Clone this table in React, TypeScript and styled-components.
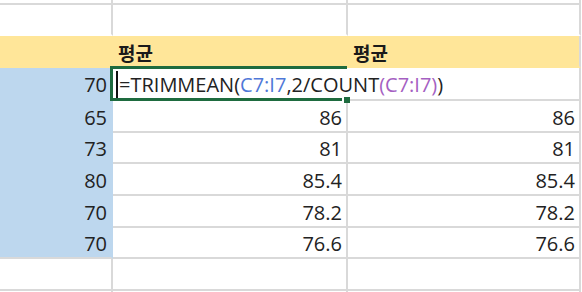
import React from "react";
import styled, { createGlobalStyle } from "styled-components";

const GlobalStyle = createGlobalStyle`
  html, body {
    margin: 0;
    padding: 0;
    background: #ffffff;
  }
  body {
    font-family: "Open Sans", "Noto Sans CJK KR", sans-serif;
    color: #222222;
  }
`;

const GRID = "#d9d9d9";
const YELLOW = "#ffe699";
const BLUE = "#bdd7ee";
const GREEN = "#1e6b3f";

const Sheet = styled.div`
  display: grid;
  grid-template-columns: 113px 235px 233px 1px;
  grid-template-rows: 5px 31px 32px 33px 32px 31px 32px 32px 31px 32px 1px;
  width: 582px;
  height: 292px;
  overflow: hidden;
`;

type Fill = "none" | "yellow" | "blue";

const Cell = styled.div<{
  $fill?: Fill;
  $align?: "left" | "right";
  $right?: boolean;
  $bottom?: boolean;
}>`
  position: relative;
  box-sizing: border-box;
  display: flex;
  align-items: center;
  justify-content: ${(p) => (p.$align === "left" ? "flex-start" : "flex-end")};
  padding: 2px 4px 0 5px;
  font-size: 20px;
  white-space: nowrap;
  background: ${(p) =>
    p.$fill === "yellow" ? YELLOW : p.$fill === "blue" ? BLUE : "transparent"};
  border-right: 2px solid ${(p) => (p.$right ? GRID : "transparent")};
  border-bottom: 2px solid ${(p) => (p.$bottom ? GRID : "transparent")};
`;

const Header = styled.span`
  font-family: "Noto Sans CJK KR", sans-serif;
  font-weight: 700;
  font-size: 19px;
  color: #1a1a1a;
`;

// editing frame around the active cell
const EditBox = styled.div`
  position: absolute;
  z-index: 3;
  left: -3px;
  top: -2px;
  right: -1px;
  bottom: -2px;
  border-top: 3px solid ${GREEN};
  border-left: 3px solid ${GREEN};
  border-bottom: 3px solid ${GREEN};
  pointer-events: none;
`;

const FillHandle = styled.div`
  position: absolute;
  right: -3px;
  bottom: -5px;
  width: 6px;
  height: 6px;
  background: ${GREEN};
  border-left: 2px solid #ffffff;
  border-top: 1px solid #ffffff;
`;

const Formula = styled.span`
  position: relative;
  z-index: 2;
  margin-left: -2px;
  display: flex;
  align-items: center;
  color: #222222;
`;

const Caret = styled.span`
  display: inline-block;
  width: 2px;
  height: 27px;
  margin-right: 1px;
  background: #111111;
`;

const Ref = styled.span<{ $color: string }>`
  color: ${(p) => p.$color};
`;

const rows = [
  { a: "70", b: null, c: null },
  { a: "65", b: "86", c: "86" },
  { a: "73", b: "81", c: "81" },
  { a: "80", b: "85.4", c: "85.4" },
  { a: "70", b: "78.2", c: "78.2" },
  { a: "70", b: "76.6", c: "76.6" },
];

const App = (): JSX.Element => {
  return (
    <>
      <GlobalStyle />
      <Sheet>
        <Cell $right $bottom />
        <Cell $right $bottom />
        <Cell $right $bottom />
        <Cell />

        <Cell $right />
        <Cell $right />
        <Cell $right />
        <Cell />

        <Cell $fill="yellow" />
        <Cell $fill="yellow" $align="left">
          <Header>평균</Header>
        </Cell>
        <Cell $fill="yellow" $align="left" $right>
          <Header>평균</Header>
        </Cell>
        <Cell />

        {rows.map((row, i) => (
          <React.Fragment key={i}>
            <Cell $fill="blue" $bottom={i === rows.length - 1}>
              {row.a}
            </Cell>
            {row.b === null ? (
              <>
                <Cell $align="left">
                  <Formula>
                    <Caret />
                    =TRIMMEAN(<Ref $color="#4f78d8">C7:I7</Ref>,2/COUNT
                    <Ref $color="#a55fc2">(C7:I7)</Ref>)
                  </Formula>
                  <EditBox>
                    <FillHandle />
                  </EditBox>
                </Cell>
                <Cell $right $bottom />
              </>
            ) : (
              <>
                <Cell $right $bottom>
                  {row.b}
                </Cell>
                <Cell $right $bottom>
                  {row.c}
                </Cell>
              </>
            )}
            <Cell />
          </React.Fragment>
        ))}

        <Cell $right $bottom />
        <Cell $right $bottom />
        <Cell $right $bottom />
        <Cell />

        <Cell $right />
        <Cell $right />
        <Cell $right />
        <Cell />
      </Sheet>
    </>
  );
};

export default App;
